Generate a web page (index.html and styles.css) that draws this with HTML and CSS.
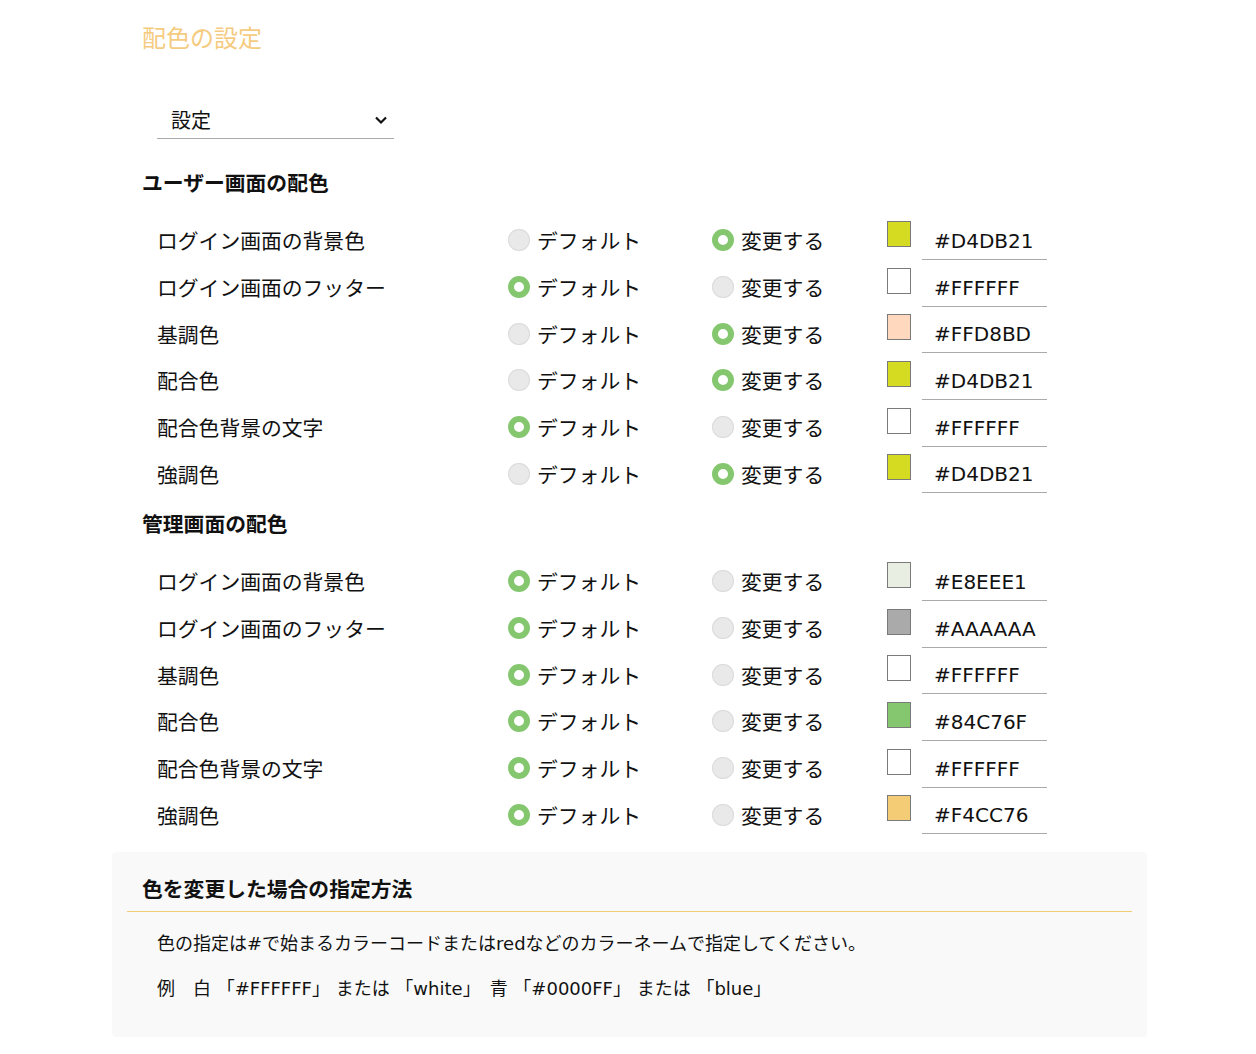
FILE: index.html
```html
<!DOCTYPE html>
<html lang="ja">
<head>
<meta charset="utf-8">
<title>配色の設定</title>
<link rel="stylesheet" href="styles.css">
</head>
<body>
<div class="page">
  <div class="main">
    <h1 class="page-title">配色の設定</h1>
    <div class="select">
      <span class="select-text">設定</span>
      <svg class="chevron" width="14" height="10" viewBox="0 0 14 10"><path d="M2 2.5 L7 7.5 L12 2.5" fill="none" stroke="#111" stroke-width="2.2"/></svg>
    </div>

    <h2 class="section-title">ユーザー画面の配色</h2>
    <div class="rows">
      <div class="row"><span class="label">ログイン画面の背景色</span><label class="opt"><span class="radio"></span>デフォルト</label><label class="opt"><span class="radio on"></span>変更する</label><span class="swatch" style="background:#D4DB21"></span><span class="code">#D4DB21</span></div>
      <div class="row"><span class="label">ログイン画面のフッター</span><label class="opt"><span class="radio on"></span>デフォルト</label><label class="opt"><span class="radio"></span>変更する</label><span class="swatch" style="background:#FFFFFF"></span><span class="code">#FFFFFF</span></div>
      <div class="row"><span class="label">基調色</span><label class="opt"><span class="radio"></span>デフォルト</label><label class="opt"><span class="radio on"></span>変更する</label><span class="swatch" style="background:#FFD8BD"></span><span class="code">#FFD8BD</span></div>
      <div class="row"><span class="label">配合色</span><label class="opt"><span class="radio"></span>デフォルト</label><label class="opt"><span class="radio on"></span>変更する</label><span class="swatch" style="background:#D4DB21"></span><span class="code">#D4DB21</span></div>
      <div class="row"><span class="label">配合色背景の文字</span><label class="opt"><span class="radio on"></span>デフォルト</label><label class="opt"><span class="radio"></span>変更する</label><span class="swatch" style="background:#FFFFFF"></span><span class="code">#FFFFFF</span></div>
      <div class="row"><span class="label">強調色</span><label class="opt"><span class="radio"></span>デフォルト</label><label class="opt"><span class="radio on"></span>変更する</label><span class="swatch" style="background:#D4DB21"></span><span class="code">#D4DB21</span></div>
    </div>

    <h2 class="section-title second">管理画面の配色</h2>
    <div class="rows">
      <div class="row"><span class="label">ログイン画面の背景色</span><label class="opt"><span class="radio on"></span>デフォルト</label><label class="opt"><span class="radio"></span>変更する</label><span class="swatch" style="background:#E8EEE1"></span><span class="code">#E8EEE1</span></div>
      <div class="row"><span class="label">ログイン画面のフッター</span><label class="opt"><span class="radio on"></span>デフォルト</label><label class="opt"><span class="radio"></span>変更する</label><span class="swatch" style="background:#AAAAAA"></span><span class="code">#AAAAAA</span></div>
      <div class="row"><span class="label">基調色</span><label class="opt"><span class="radio on"></span>デフォルト</label><label class="opt"><span class="radio"></span>変更する</label><span class="swatch" style="background:#FFFFFF"></span><span class="code">#FFFFFF</span></div>
      <div class="row"><span class="label">配合色</span><label class="opt"><span class="radio on"></span>デフォルト</label><label class="opt"><span class="radio"></span>変更する</label><span class="swatch" style="background:#84C76F"></span><span class="code">#84C76F</span></div>
      <div class="row"><span class="label">配合色背景の文字</span><label class="opt"><span class="radio on"></span>デフォルト</label><label class="opt"><span class="radio"></span>変更する</label><span class="swatch" style="background:#FFFFFF"></span><span class="code">#FFFFFF</span></div>
      <div class="row"><span class="label">強調色</span><label class="opt"><span class="radio on"></span>デフォルト</label><label class="opt"><span class="radio"></span>変更する</label><span class="swatch" style="background:#F4CC76"></span><span class="code">#F4CC76</span></div>
    </div>
  </div>

  <div class="info">
    <h3 class="info-title">色を変更した場合の指定方法</h3>
    <div class="info-body">
      <p>色の指定は#で始まるカラーコードまたはredなどのカラーネームで指定してください。</p>
      <p>例　白 「#FFFFFF」 または 「white」　青 「#0000FF」 または 「blue」</p>
    </div>
  </div>
</div>
</body>
</html>
```
FILE: styles.css
```css
* { box-sizing: border-box; }
html, body { margin: 0; padding: 0; background: #fff; }
body {
  font-family: "Noto Sans CJK JP", "Noto Sans", sans-serif;
  color: #111;
}
.page {
  width: 1035px;
  margin-left: 112px;
  padding-top: 19px;
}
.main { padding-left: 30px; }

.page-title {
  margin: 0;
  font-size: 24px;
  font-weight: 400;
  line-height: 36px;
  color: #f5cb7f;
}

.select {
  margin: 46px 0 0 15px;
  width: 237px;
  height: 38px;
  border-bottom: 1px solid #aaa;
  display: flex;
  align-items: center;
  justify-content: space-between;
  padding: 0 6px 0 14px;
}
.select-text { font-size: 20px; line-height: 36px; }
.chevron { display: block; }

.section-title {
  margin: 28px 0 20px;
  font-size: 20.8px;
  font-weight: 700;
  line-height: 30px;
}
.section-title.second { margin-top: 11px; }

.rows {
  display: grid;
  grid-template-rows: repeat(6, 1fr);
  height: 280px;
}
.row {
  display: grid;
  grid-template-columns: 351px 204px 175px 35px 125px;
  align-items: center;
  padding-left: 15px;
  font-size: 20.8px;
}
.label { line-height: 30px; }
.opt {
  display: flex;
  align-items: center;
  gap: 7px;
  line-height: 30px;
}
.radio {
  width: 22px;
  height: 22px;
  border-radius: 50%;
  background: #e9e9e9;
  box-shadow: inset 0 0 0 1px #dcdcdc;
  flex: none;
}
.radio.on {
  background: #fff;
  box-shadow: none;
  border: 6.5px solid #84c76f;
}
.swatch {
  width: 24px;
  height: 26px;
  border: 1px solid #7a7a7a;
  align-self: start;
  margin-top: 4px;
}
.code {
  font-family: "DejaVu Sans", "Noto Sans CJK JP", sans-serif;
  font-size: 20px;
  height: 40px;
  line-height: 42px;
  padding-left: 12px;
  border-bottom: 1px solid #aaa;
  align-self: start;
  margin-top: 3px;
}

.info {
  margin-top: 14px;
  background: #f9f9f9;
  border-radius: 4px;
  padding: 16px 15px 33px;
}
.info-title {
  margin: 0;
  font-size: 20.8px;
  font-weight: 700;
  line-height: 40px;
  padding: 0 15px 3px;
  border-bottom: 1px solid #f4cc76;
}
.info-body { padding: 17px 30px 0; }
.info-body p {
  margin: 0 0 15px;
  font-family: "DejaVu Sans", "Noto Sans CJK JP", sans-serif;
  font-size: 18px;
  line-height: 30px;
  white-space: pre;
}
.info-body p:last-child { margin-bottom: 0; }
```
